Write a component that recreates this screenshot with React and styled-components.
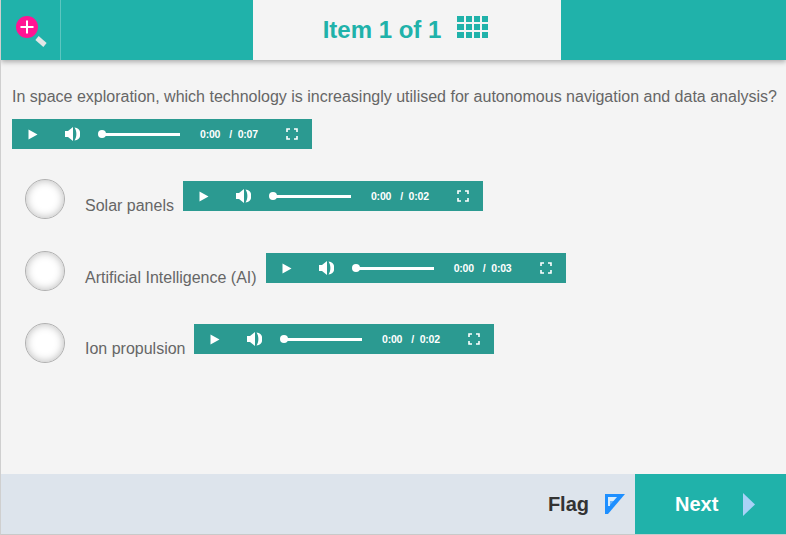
import React from "react";
import styled, { createGlobalStyle } from "styled-components";

const teal = "#20b2aa";
const playerGreen = "#2b9a91";

const GlobalStyle = createGlobalStyle`
  html, body {
    margin: 0;
    padding: 0;
    background: #f4f4f4;
  }
  * {
    box-sizing: border-box;
  }
`;

const Page = styled.div`
  width: 786px;
  height: 535px;
  display: flex;
  flex-direction: column;
  overflow: hidden;
  background: #f4f4f4;
  border-left: 1px solid #cfcfcf;
  border-bottom: 1px solid #c9c9c9;
  font-family: "Liberation Sans", Arial, sans-serif;
`;

const Header = styled.header`
  height: 60px;
  flex: none;
  display: flex;
  background: ${teal};
  box-shadow: 0 2px 5px rgba(0, 0, 0, 0.3);
`;

const ZoomCell = styled.div`
  width: 60px;
  margin-right: 192px;
  display: flex;
  padding: 15px 0 0 13px;
  border-right: 1px solid #5cc6c0;
`;

const TitleCell = styled.div`
  width: 308px;
  display: flex;
  justify-content: center;
  align-items: flex-start;
  gap: 16px;
  padding: 16px 3px 0 0;
  background: #f4f4f4;
`;

const Title = styled.h1`
  margin: 0;
  font-size: 24px;
  line-height: 28px;
  font-weight: 700;
  color: ${teal};
`;

const Grid = styled.div`
  width: 31px;
  height: 22px;
  display: grid;
  grid-template-columns: repeat(4, 1fr);
  grid-template-rows: repeat(3, 1fr);
  gap: 2px;
`;

const GridCell = styled.span`
  background: ${teal};
`;

const Content = styled.main`
  flex: 1;
  padding: 27px 0 0 11px;
`;

const Question = styled.p`
  margin: 0 0 13px;
  font-size: 16px;
  line-height: 19px;
  color: #666;
  white-space: nowrap;
`;

const Options = styled.div`
  display: flex;
  flex-direction: column;
  gap: 32px;
  margin-top: 30px;
  padding-left: 13px;
`;

const Option = styled.div`
  display: flex;
  align-items: flex-start;
  height: 40px;
`;

const Radio = styled.span`
  width: 40px;
  height: 40px;
  flex: none;
  border-radius: 50%;
  border: 1px solid #b0b0b0;
  background: #fff;
  box-shadow: inset 0 0 8px rgba(0, 0, 0, 0.28);
`;

const OptionLabel = styled.label`
  margin: ${(p) => p.$top}px ${(p) => p.$right}px 0 20px;
  font-size: 16px;
  line-height: 19px;
  color: #666;
  white-space: nowrap;
`;

const PlayerBar = styled.div`
  width: 300px;
  height: 30px;
  flex: none;
  margin-top: ${(p) => p.$top || 0}px;
  display: flex;
  align-items: center;
  padding-left: 16px;
  background: ${playerGreen};
  color: #fff;
`;

const VolumeSlot = styled.span`
  display: flex;
  margin-left: 27px;
`;

const SeekTrack = styled.div`
  position: relative;
  width: 79px;
  height: 3px;
  margin-left: 21px;
  background: #fff;
`;

const SeekKnob = styled.span`
  position: absolute;
  left: -3px;
  top: -2.5px;
  width: 8px;
  height: 8px;
  border-radius: 50%;
  background: #fff;
`;

const Times = styled.div`
  width: 86px;
  margin-left: 20px;
  display: flex;
  gap: 9px;
  font-size: 10.5px;
  font-weight: 700;
  letter-spacing: -0.2px;
`;

const Total = styled.span`
  word-spacing: 3px;
`;

const Footer = styled.footer`
  height: 60px;
  flex: none;
  display: flex;
  justify-content: flex-end;
  background: #dde4ec;
`;

const FlagButton = styled.div`
  display: flex;
  align-items: center;
  gap: 16px;
  padding: 0 10px 0 0;
  font-size: 20px;
  font-weight: 700;
  color: #333;
`;

const NextButton = styled.div`
  width: 151px;
  display: flex;
  align-items: center;
  padding-left: 40px;
  gap: 25px;
  background: ${teal};
  color: #fff;
  font-size: 20px;
  font-weight: 700;
`;

const ZoomIcon = () => (
  <svg width="34" height="32" viewBox="0 0 34 32">
    <path d="M23 23 L31 30" stroke="#e4e6e6" strokeWidth="5" />
    <circle cx="13" cy="12" r="11" fill="#ff1493" />
    <path d="M6.5 12 H19.5 M13 5.5 V18.5" stroke="#fff" strokeWidth="2" />
  </svg>
);

const PlayIcon = () => (
  <svg width="10" height="11" viewBox="0 0 10 11">
    <path d="M0.5 0.5 L9.5 5.5 L0.5 10.5 Z" fill="#fff" />
  </svg>
);

const VolumeIcon = () => (
  <svg width="15" height="14" viewBox="0 0 15 14">
    <path d="M0 4 H3 L8 0 V14 L3 10 H0 Z" fill="#fff" />
    <path d="M9.5 0.5 C14 1 15.5 4 15 7 C15.5 10 14 13 9.5 13.5 C12 10 12 4 9.5 0.5 Z" fill="#fff" />
  </svg>
);

const FullscreenIcon = () => (
  <svg width="12" height="12" viewBox="0 0 12 12">
    <path d="M1 4 V1 H4 M8 1 H11 V4 M11 8 V11 H8 M4 11 H1 V8" stroke="#fff" strokeWidth="1.6" fill="none" />
  </svg>
);

const FlagIcon = () => (
  <svg width="20" height="20" viewBox="0 0 20 20">
    <path d="M0 0 H20 L3 20 H0 Z" fill="#1e8fff" />
    <path d="M3 3 H12 L8.5 7 H5 V12 H3 Z" fill="#d8ecfb" />
    <path d="M5 7 H8.5 L5 11 Z" fill="#6db5fb" />
  </svg>
);

const NextArrow = () => (
  <svg width="12" height="23" viewBox="0 0 12 23">
    <path d="M0 0 L12 11.5 L0 23 Z" fill="#a9d2f7" />
  </svg>
);

const Player = ({ total, top }) => (
  <PlayerBar $top={top}>
    <PlayIcon />
    <VolumeSlot>
      <VolumeIcon />
    </VolumeSlot>
    <SeekTrack>
      <SeekKnob />
    </SeekTrack>
    <Times>
      <span>0:00</span>
      <Total>/ {total}</Total>
    </Times>
    <FullscreenIcon />
  </PlayerBar>
);

const options = [
  { label: "Solar panels", total: "0:02", top: 2, labelTop: 17, labelRight: 9 },
  { label: "Artificial Intelligence (AI)", total: "0:03", top: 2, labelTop: 17, labelRight: 9 },
  { label: "Ion propulsion", total: "0:02", top: 1, labelTop: 16, labelRight: 8.5 },
];

const App = () => (
  <>
    <GlobalStyle />
    <Page>
      <Header>
        <ZoomCell>
          <ZoomIcon />
        </ZoomCell>
        <TitleCell>
          <Title>Item 1 of 1</Title>
          <Grid>
            {Array.from({ length: 12 }).map((_, i) => (
              <GridCell key={i} />
            ))}
          </Grid>
        </TitleCell>
      </Header>
      <Content>
        <Question>
          In space exploration, which technology is increasingly utilised for autonomous navigation and data analysis?
        </Question>
        <Player total="0:07" />
        <Options>
          {options.map((o) => (
            <Option key={o.label}>
              <Radio />
              <OptionLabel $top={o.labelTop} $right={o.labelRight}>{o.label}</OptionLabel>
              <Player total={o.total} top={o.top} />
            </Option>
          ))}
        </Options>
      </Content>
      <Footer>
        <FlagButton>
          Flag
          <FlagIcon />
        </FlagButton>
        <NextButton>
          Next
          <NextArrow />
        </NextButton>
      </Footer>
    </Page>
  </>
);

export default App;
